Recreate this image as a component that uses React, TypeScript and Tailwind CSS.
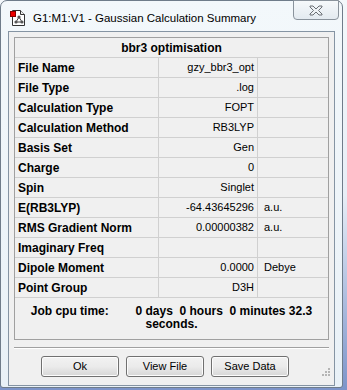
const rows: [string, string, string][] = [
  ["File Name", "gzy_bbr3_opt", ""],
  ["File Type", ".log", ""],
  ["Calculation Type", "FOPT", ""],
  ["Calculation Method", "RB3LYP", ""],
  ["Basis Set", "Gen", ""],
  ["Charge", "0", ""],
  ["Spin", "Singlet", ""],
  ["E(RB3LYP)", "-64.43645296", "a.u."],
  ["RMS Gradient Norm", "0.00000382", "a.u."],
  ["Imaginary Freq", "", ""],
  ["Dipole Moment", "0.0000", "Debye"],
  ["Point Group", "D3H", ""],
];

const font = { fontFamily: '"Liberation Sans", Arial, sans-serif' };

const AppIcon = () => (
  <svg width="17" height="18" viewBox="0 0 17 18">
    <path d="M2.5 1.5h8l4 4v11h-12z" fill="#fff" stroke="#333" />
    <path d="M10.5 1.5v4h4" fill="#eee" stroke="#333" />
    <rect x="0.5" y="2.5" width="5" height="5" fill="#e00" stroke="#800" />
    <line x1="9" y1="8" x2="6" y2="13" stroke="#444" />
    <line x1="9" y1="8" x2="12" y2="13" stroke="#444" />
    <line x1="6" y1="13" x2="12" y2="13" stroke="#444" />
    <circle cx="9" cy="8" r="1.6" fill="#555" />
    <circle cx="6" cy="13" r="1.6" fill="#555" />
    <circle cx="12" cy="13" r="1.6" fill="#555" />
  </svg>
);

const CloseGlyph = () => (
  <svg width="14" height="11" viewBox="0 0 14 11">
    <path
      d="M1 1h3l3 3 3-3h3v1l-3.5 3.5L13 9v1h-3L7 7l-3 3H1V9l3.5-3.5L1 2z"
      fill="#eef2f5"
      stroke="#6a6f75"
      strokeWidth="1"
      strokeLinejoin="round"
    />
  </svg>
);

const Button = ({ label }: { label: string }) => (
  <button className="w-[78px] h-[21px] rounded-[3px] border border-[#707070] bg-gradient-to-b from-[#f2f2f2] via-[#ebebeb] to-[#d6d6d6] text-[11px] text-black shadow-[inset_0_0_0_1px_#fcfcfc]">
    {label}
  </button>
);

export default function App() {
  return (
    <div
      className="w-[347px] h-[390px] overflow-hidden bg-gradient-to-b from-[#f4f8fb] via-[#e8eef6] to-[#7d94c9]"
      style={font}
    >
      <div className="w-[343px] h-[388px] rounded-t-[7px] rounded-b-[3px] border border-[#6f7c8a] bg-gradient-to-b from-[#f3f8fb] to-[#e9f1f7] flex flex-col">
        <div className="h-[30px] flex items-start relative">
          <div className="mt-[8px] ml-[9px]">
            <AppIcon />
          </div>
          <div className="ml-[6px] mt-[9px] text-[11.5px] text-black">
            G1:M1:V1 - Gaussian Calculation Summary
          </div>
          <div className="absolute right-[3px] top-[-1px] w-[46px] h-[20px] rounded-b-[4px] border border-[#8a939c] bg-gradient-to-b from-[#f6f9fb] to-[#e3eaf0] flex items-center justify-center">
            <CloseGlyph />
          </div>
        </div>
        <div className="mx-[7px] h-[355px] border border-[#8594a3] bg-[#f0f0f0] flex flex-col">
          <div className="mx-[5px] mt-[5px] border border-[#a0a0a0]">
            <div className="h-[20px] flex items-center justify-center text-[12px] font-bold border-b border-[#d0d0d0]">
              bbr3 optimisation
            </div>
            {rows.map(([label, value, unit]) => (
              <div
                key={label}
                className="grid grid-cols-[144px_99px_1fr] h-[20px] border-b border-[#d0d0d0] text-black"
              >
                <div className="flex items-center pl-[3px] text-[12px] font-bold border-r border-[#d0d0d0]">
                  {label}
                </div>
                <div className="flex items-center justify-end pr-[3px] text-[11px] border-r border-[#d0d0d0]">
                  {value}
                </div>
                <div className="flex items-center pl-[6px] text-[11px]">{unit}</div>
              </div>
            ))}
            <div className="h-[41px] flex flex-col items-center justify-center text-[12px] font-bold leading-[13px] pb-[2px]">
              <div className="whitespace-pre">Job cpu time:        0 days  0 hours  0 minutes 32.3</div>
              <div>seconds.</div>
            </div>
          </div>
          <div className="mx-[5px] mt-[7px] border-t border-[#a0a0a0] border-b border-b-white" />
          <div className="relative flex gap-[7px] pl-[32px] mt-[7px]">
            <Button label="Ok" />
            <Button label="View File" />
            <Button label="Save Data" />
            <svg
              className="absolute right-[4px] top-[12px]"
              width="10"
              height="10"
              viewBox="0 0 10 10"
            >
              {[
                [8, 0],
                [5, 3],
                [8, 3],
                [2, 6],
                [5, 6],
                [8, 6],
              ].map(([x, y]) => (
                <rect key={`${x}-${y}`} x={x} y={y} width="2" height="2" fill="#b5b5b5" />
              ))}
            </svg>
          </div>
        </div>
      </div>
    </div>
  );
}
